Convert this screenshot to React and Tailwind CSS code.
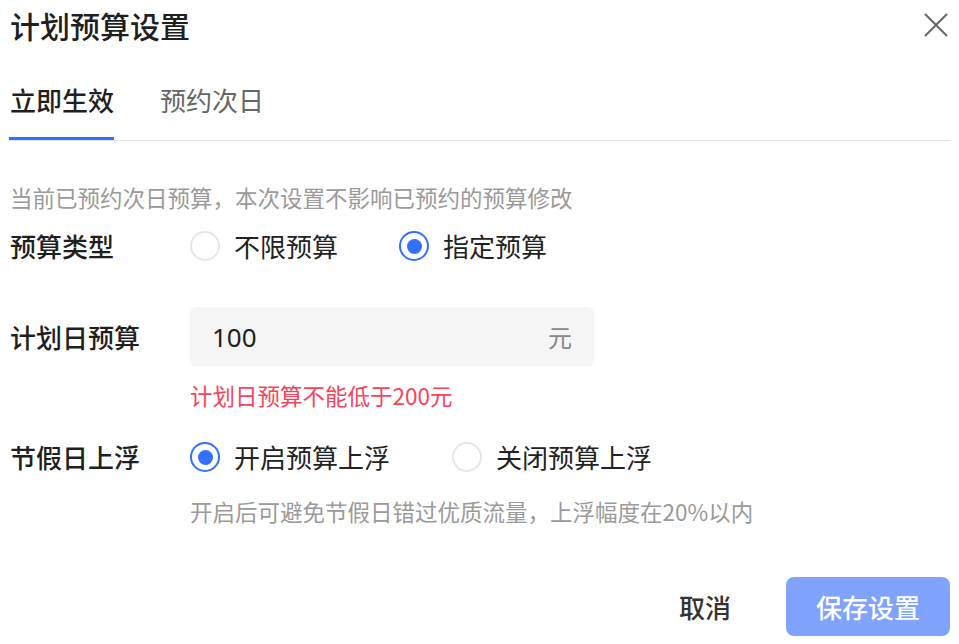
import { useState } from "react";

const font = { fontFamily: '"Noto Sans CJK SC", "Noto Sans", sans-serif' };

function Radio({ checked, label, onClick }) {
    return (
        <button type="button" onClick={onClick} className="flex items-center gap-[14px]">
            <span
                className={
                    checked
                        ? "w-[30px] h-[30px] rounded-full border-2 border-[#3370ff] flex items-center justify-center"
                        : "w-[30px] h-[30px] rounded-full border-2 border-[#e6e6e6]"
                }
            >
                {checked && <span className="w-[15px] h-[15px] rounded-full bg-[#3370ff]" />}
            </span>
            <span className="text-[26px] leading-[32px] text-[#222]">{label}</span>
        </button>
    );
}

export default function App() {
    const [tab, setTab] = useState(0);
    const [type, setType] = useState("fixed");
    const [float, setFloat] = useState("on");

    return (
        <div style={font} className="w-[959px] h-[644px] bg-white pl-[10px] pr-[9px] flex flex-col overflow-hidden">
            {/* header */}
            <div className="flex items-start justify-between mt-[7px]">
                <h1 className="text-[30px] leading-[36px] font-medium text-[#1f1f1f]">计划预算设置</h1>
                <button type="button" className="mt-[5px] mr-[1px] text-[#666]">
                    <svg width="26" height="26" viewBox="0 0 26 26" fill="none" stroke="currentColor" strokeWidth="2">
                        <path d="M2 2L24 24M24 2L2 24" />
                    </svg>
                </button>
            </div>

            {/* tabs */}
            <div className="flex gap-[46px] mt-[41px] border-b border-[#e2e2e2] -ml-[1px]">
                {["立即生效", "预约次日"].map((t, i) => (
                    <button
                        key={t}
                        type="button"
                        onClick={() => setTab(i)}
                        className={
                            tab === i
                                ? "pl-[1px] pb-[21px] border-b-[3px] border-[#3370ff] text-[26px] leading-[32px] font-medium text-[#1f1f1f]"
                                : "pb-[21px] border-b-[3px] border-transparent text-[26px] leading-[32px] text-[#666]"
                        }
                    >
                        {t}
                    </button>
                ))}
            </div>

            <p className="mt-[42px] text-[22.5px] leading-[28px] text-[#9a9a9a]">
                当前已预约次日预算，本次设置不影响已预约的预算修改
            </p>

            {/* budget type */}
            <div className="flex items-center mt-[19px]">
                <div className="w-[180px] text-[26px] leading-[32px] font-medium text-[#1f1f1f]">预算类型</div>
                <div className="flex gap-[61px]">
                    <Radio checked={type === "none"} label="不限预算" onClick={() => setType("none")} />
                    <Radio checked={type === "fixed"} label="指定预算" onClick={() => setType("fixed")} />
                </div>
            </div>

            {/* daily budget */}
            <div className="flex items-center mt-[45px]">
                <div className="w-[180px] text-[26px] leading-[32px] font-medium text-[#1f1f1f]">计划日预算</div>
                <div className="w-[404px] h-[59px] rounded-[6px] bg-[#f5f5f5] flex items-center justify-between pl-[22px] pr-[22px]">
                    <span className="text-[26px] leading-[32px] text-[#222]" style={{ fontFamily: '"Noto Sans", "Noto Sans CJK SC", sans-serif' }}>100</span>
                    <span className="text-[24px] leading-[32px] text-[#888]">元</span>
                </div>
            </div>
            <p className="ml-[180px] mt-[15px] text-[22.5px] leading-[28px] text-[#f5455c]">计划日预算不能低于200元</p>

            {/* holiday float */}
            <div className="flex items-center mt-[32px]">
                <div className="w-[180px] text-[26px] leading-[32px] font-medium text-[#1f1f1f]">节假日上浮</div>
                <div className="flex gap-[62px]">
                    <Radio checked={float === "on"} label="开启预算上浮" onClick={() => setFloat("on")} />
                    <Radio checked={float === "off"} label="关闭预算上浮" onClick={() => setFloat("off")} />
                </div>
            </div>
            <p className="ml-[180px] mt-[24px] text-[22.5px] leading-[28px] text-[#9a9a9a]">
                开启后可避免节假日错过优质流量，上浮幅度在20%以内
            </p>

            {/* footer */}
            <div className="flex items-center justify-end gap-[55px] mt-[52px]">
                <button type="button" className="text-[26px] leading-[32px] font-medium text-[#333]">取消</button>
                <button
                    type="button"
                    className="w-[164px] h-[59px] rounded-[8px] bg-[#7fa3ff] text-white text-[26px] leading-[32px] font-medium"
                >
                    保存设置
                </button>
            </div>
        </div>
    );
}
